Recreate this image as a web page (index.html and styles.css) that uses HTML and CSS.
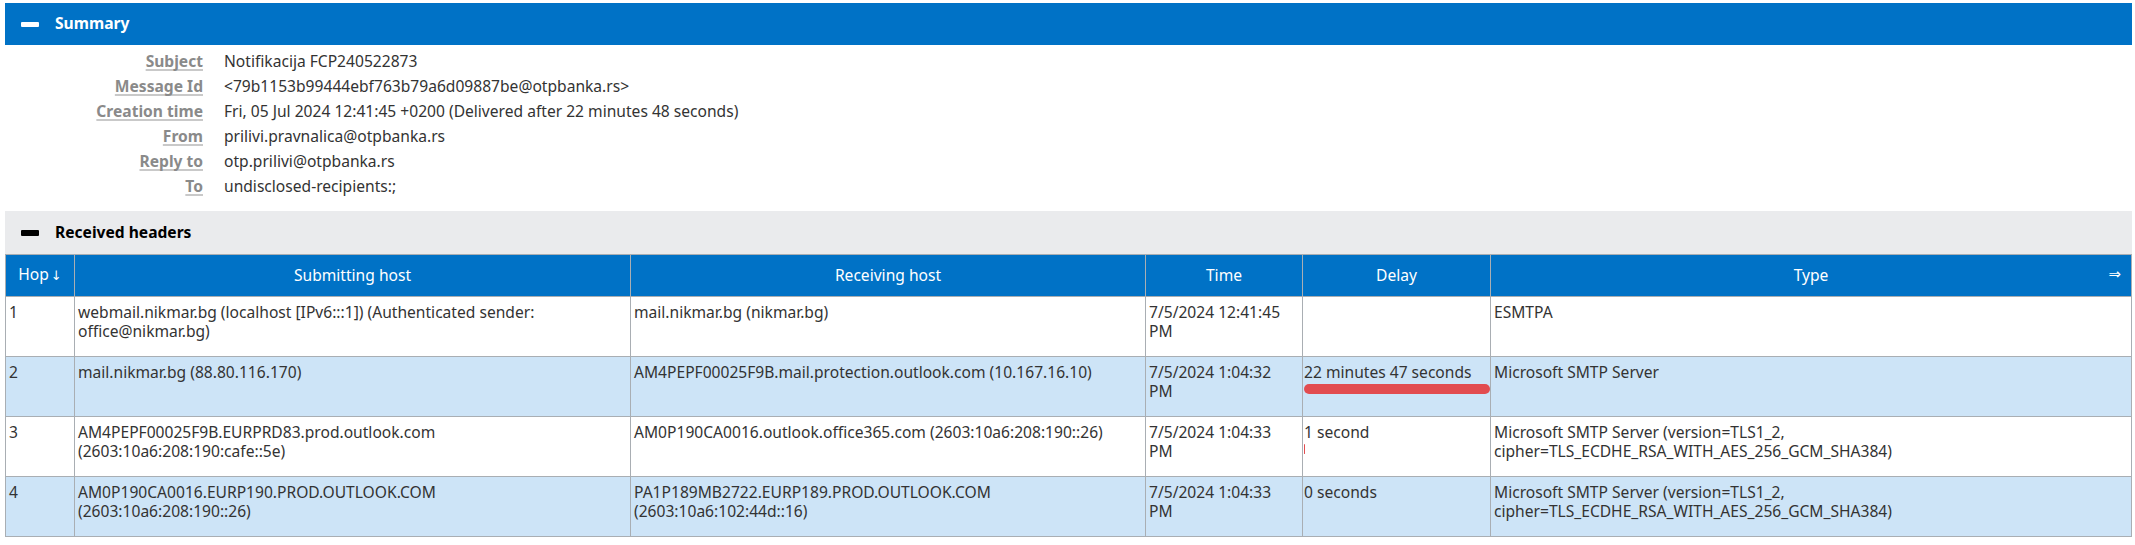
FILE: index.html
```html
<!DOCTYPE html>
<html>
<head>
<meta charset="utf-8">
<title>Message header analysis</title>
<link rel="stylesheet" href="styles.css">
</head>
<body>
<section class="panel">
  <div class="panel-head panel-head--blue"><span class="minus"></span><span class="panel-title">Summary</span></div>
  <div class="summary">
    <div class="label"><span>Subject</span></div><div class="value">Notifikacija FCP240522873</div>
    <div class="label"><span>Message Id</span></div><div class="value">&lt;79b1153b99444ebf763b79a6d09887be@otpbanka.rs&gt;</div>
    <div class="label"><span>Creation time</span></div><div class="value">Fri, 05 Jul 2024 12:41:45 +0200 (Delivered after 22 minutes 48 seconds)</div>
    <div class="label"><span>From</span></div><div class="value">prilivi.pravnalica@otpbanka.rs</div>
    <div class="label"><span>Reply to</span></div><div class="value">otp.prilivi@otpbanka.rs</div>
    <div class="label"><span>To</span></div><div class="value">undisclosed-recipients:;</div>
  </div>
</section>
<section class="panel">
  <div class="panel-head panel-head--grey"><span class="minus minus--dark"></span><span class="panel-title">Received headers</span></div>
  <table class="hops">
    <colgroup>
      <col class="c-hop"><col class="c-sub"><col class="c-rec"><col class="c-time"><col class="c-delay"><col>
    </colgroup>
    <thead>
      <tr>
        <th>Hop<span class="arrow">↓</span></th>
        <th>Submitting host</th>
        <th>Receiving host</th>
        <th>Time</th>
        <th>Delay</th>
        <th class="type-head">Type<span class="expand">⇒</span></th>
      </tr>
    </thead>
    <tbody>
      <tr>
        <td>1</td>
        <td>webmail.nikmar.bg (localhost [IPv6:::1]) (Authenticated sender: office@nikmar.bg)</td>
        <td>mail.nikmar.bg (nikmar.bg)</td>
        <td>7/5/2024 12:41:45 PM</td>
        <td class="delay"></td>
        <td>ESMTPA</td>
      </tr>
      <tr class="alt">
        <td>2</td>
        <td>mail.nikmar.bg (88.80.116.170)</td>
        <td>AM4PEPF00025F9B.mail.protection.outlook.com (10.167.16.10)</td>
        <td>7/5/2024 1:04:32 PM</td>
        <td class="delay">22 minutes 47 seconds<div class="bar" style="width:100%"></div></td>
        <td>Microsoft SMTP Server</td>
      </tr>
      <tr>
        <td>3</td>
        <td>AM4PEPF00025F9B.EURPRD83.prod.outlook.com (2603:10a6:208:190:cafe::5e)</td>
        <td>AM0P190CA0016.outlook.office365.com (2603:10a6:208:190::26)</td>
        <td>7/5/2024 1:04:33 PM</td>
        <td class="delay">1 second<div class="bar" style="width:1px"></div></td>
        <td>Microsoft SMTP Server (version=TLS1_2, cipher=TLS_ECDHE_RSA_WITH_AES_256_GCM_SHA384)</td>
      </tr>
      <tr class="alt">
        <td>4</td>
        <td>AM0P190CA0016.EURP190.PROD.OUTLOOK.COM<br>(2603:10a6:208:190::26)</td>
        <td>PA1P189MB2722.EURP189.PROD.OUTLOOK.COM (2603:10a6:102:44d::16)</td>
        <td>7/5/2024 1:04:33 PM</td>
        <td class="delay">0 seconds<div class="bar" style="width:0"></div></td>
        <td>Microsoft SMTP Server (version=TLS1_2, cipher=TLS_ECDHE_RSA_WITH_AES_256_GCM_SHA384)</td>
      </tr>
    </tbody>
  </table>
</section>
</body>
</html>
```
FILE: styles.css
```css
html, body {
  background: #ffffff;
}
body {
  margin: 3px 3px 0 5px;
  font-family: "Noto Sans", "Open Sans", sans-serif;
  font-size: 15.6px;
  line-height: 19.5px;
  color: #333333;
}
.panel-head {
  display: flex;
  align-items: center;
  height: 42px;
  padding-left: 16px;
  font-weight: bold;
}
.panel-head--blue {
  background: #0072c6;
  color: #ffffff;
}
.panel-head--grey {
  background: #eaebed;
  color: #000000;
  height: 43px;
}
.minus {
  width: 18px;
  height: 5px;
  border-radius: 1px;
  background: #ffffff;
  margin-right: 16px;
}
.minus--dark {
  background: #000000;
  height: 6px;
}
.summary {
  display: grid;
  grid-template-columns: 198px 1fr;
  column-gap: 21px;
  padding: 4px 0 12px 0;
  line-height: 25px;
}
.label {
  text-align: right;
  font-weight: bold;
  color: #8a8a8a;
}
.label span {
  text-decoration: underline;
  text-decoration-color: #c9c9c9;
  text-decoration-thickness: 2px;
  text-underline-offset: 2px;
  text-decoration-skip-ink: none;
}
.value {
  color: #333333;
}
.hops {
  width: 100%;
  border-collapse: collapse;
  table-layout: fixed;
}
.c-hop { width: 69px; }
.c-sub { width: 556px; }
.c-rec { width: 515px; }
.c-time { width: 157px; }
.c-delay { width: 188px; }
.hops th, .hops td {
  border: 1px solid #a9aeb3;
}
.hops th {
  background: #0072c6;
  color: #ffffff;
  font-weight: normal;
  padding: 10px 3px;
  text-align: center;
}
.arrow {
  margin-left: 2px;
  font-family: "DejaVu Sans", sans-serif;
  font-size: 13px;
}
.type-head {
  position: relative;
}
.expand {
  position: absolute;
  right: 10px;
  top: 10px;
  font-family: "DejaVu Sans", sans-serif;
  font-size: 15px;
}
.hops td {
  vertical-align: top;
  padding: 6px 10px 14px 3px;
  text-align: left;
  word-wrap: break-word;
}
.hops tr.alt td {
  background: #cde4f7;
}
.hops td.delay {
  padding-left: 1px;
  padding-right: 0;
}
.bar {
  height: 10px;
  margin-top: 2px;
  border-radius: 5px;
  background: #e24c50;
}
```
